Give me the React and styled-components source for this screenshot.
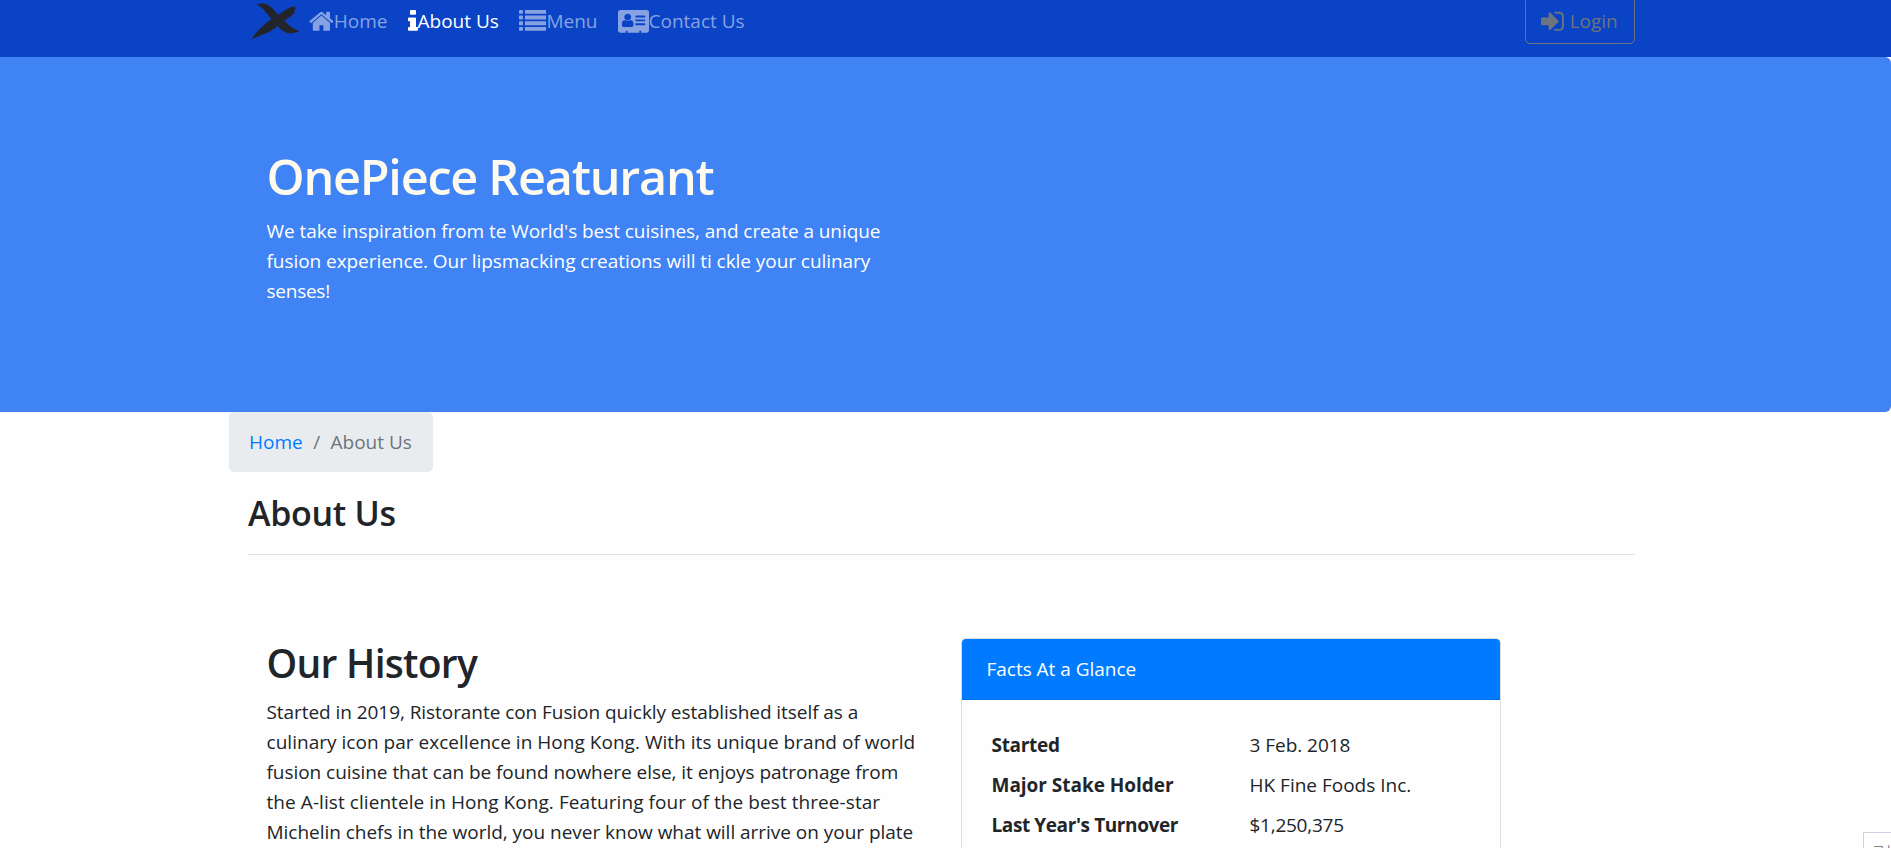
import React from 'react';
import styled, { createGlobalStyle } from 'styled-components';

const GlobalStyle = createGlobalStyle`
  *, *::before, *::after { box-sizing: border-box; }
  html, body { margin: 0; height: 100%; overflow: hidden; }
  body {
    background: #fefefe;
    color: #212529;
    font: 400 19px/30px "Open Sans", "Noto Sans", "Noto Sans CJK KR", sans-serif;
    letter-spacing: -0.02px;
  }
  h1, h2, h3, p, ul, ol, dl, dd { margin: 0; padding: 0; }
`;

const Page = styled.div`
  height: 848px;
  overflow: hidden;
`;

const Navbar = styled.nav`
  height: 57px;
  background: #0b43c6;
  padding-left: 248px;
`;

const NavInner = styled.div`
  width: 1387px;
  display: flex;
  align-items: flex-start;
`;

const Brand = styled.a`
  width: 51px;
  height: 42px;
  margin-right: 10px;
  padding-left: 2px;
  svg { display: block; }
`;

const NavList = styled.ul`
  display: flex;
  gap: 20px;
  list-style: none;
  padding-top: 6px;
`;

const NavLink = styled.a`
  display: flex;
  height: 30px;
  white-space: nowrap;
  color: ${(p) => (p.$active ? '#fff' : '#86a2e3')};
  letter-spacing: ${(p) => p.$spacing || 0}px;
`;

const Glyph = styled.svg`
  display: block;
  flex: none;
  height: 26.67px;
  width: ${(p) => p.$width}px;
  margin-top: 2.2px;
  fill: currentColor;
`;

const LoginButton = styled.a`
  display: flex;
  gap: 2px;
  width: 110px;
  height: 48px;
  margin: -4px 0 0 auto;
  padding: 9px 15px 0;
  border: 1px solid #6c757d;
  border-radius: 5px;
  color: #6c757d;
`;

const Jumbotron = styled.header`
  height: 355px;
  padding: 89px 0 0 266.5px;
  background: #3f83f4;
  color: #fff;
  border-radius: 0 6px 6px 0;
`;

const Title = styled.h1`
  margin-bottom: 10px;
  color: floralwhite;
  font-size: 48.5px;
  font-weight: 600;
  line-height: 60px;
  letter-spacing: -1.22px;
`;

const Line = styled.span`
  display: block;
  white-space: nowrap;
  letter-spacing: ${(p) => p.$spacing || 0}px;
`;

const Container = styled.main`
  width: 1425px;
  margin-left: 229px;
`;

const Breadcrumb = styled.ol`
  display: inline-flex;
  height: 60px;
  width: 204px;
  padding: 15px 20px;
  border-radius: 5px;
  background: #e9ecef;
  list-style: none;
  color: #6c757d;
  vertical-align: top;
`;

const Crumb = styled.li`
  white-space: nowrap;
  a { color: #007bff; }
  & + &::before { content: "/"; padding: 0 10.5px; }
`;

const PageHeading = styled.h3`
  margin: 20px 19px 0;
  height: 63px;
  border-bottom: 1px solid #e1e2e3;
  font-size: 34px;
  font-weight: 600;
  line-height: 42px;
  letter-spacing: -0.3px;
`;

const Columns = styled.div`
  display: flex;
  padding: 83px 0 0 37.5px;
`;

const History = styled.section`
  width: 694px;
`;

const SectionTitle = styled.h2`
  margin: 1px 0 10px;
  font-size: 39px;
  font-weight: 600;
  line-height: 48px;
  letter-spacing: -0.72px;
`;

const Card = styled.section`
  width: 540px;
  height: 300px;
  border: 1px solid #dcdddf;
  border-radius: 5px;
  overflow: hidden;
`;

const CardHeader = styled.div`
  height: 61px;
  padding: 15px 25px;
  background: #007bff;
  border-bottom: 1px solid #006fe6;
  color: #fff;
`;

const Facts = styled.dl`
  display: grid;
  grid-template-columns: 258px 1fr;
  row-gap: 10px;
  padding: 30px 0 0 30px;
`;

const Term = styled.dt`
  font-weight: 700;
  white-space: nowrap;
  letter-spacing: ${(p) => p.$spacing}px;
`;

const Detail = styled.dd`
  white-space: nowrap;
  letter-spacing: ${(p) => p.$spacing}px;
`;

const Tooltip = styled.div`
  position: fixed;
  left: 1863px;
  top: 832px;
  width: 60px;
  height: 30px;
  padding: 7px 8px;
  border: 1px solid #cfcfdf;
  background: #fff;
  color: #8d8078;
  font: 14px/20px "Noto Sans CJK KR", sans-serif;
  white-space: nowrap;
`;

const HomeIcon = () => (
  <Glyph $width={24.8} viewBox="0 0 1664 1792">
    <path d="M1408 992v480q0 26-19 45t-45 19h-384v-384h-256v384h-384q-26 0-45-19t-19-45v-480q0-1 .5-3t.5-3l575-474 575 474q1 2 1 6zm223-69l-62 74q-8 9-21 11h-3q-13 0-21-7l-692-577-692 577q-12 8-24 7-13-2-21-11l-62-74q-8-10-7-23.5t11-21.5l719-599q32-26 76-26t76 26l244 204v-195q0-14 9-23t23-9h192q14 0 23 9t9 23v408l219 182q10 8 11 21.5t-7 23.5z" />
  </Glyph>
);

const InfoIcon = () => (
  <Glyph $width={10} viewBox="0 0 640 1792" preserveAspectRatio="none">
    <path d="M640 1344v128q0 26-19 45t-45 19h-512q-26 0-45-19t-19-45v-128q0-26 19-45t45-19h64v-384h-64q-26 0-45-19t-19-45v-128q0-26 19-45t45-19h384q26 0 45 19t19 45v576h64q26 0 45 19t19 45zm-128-1152v192q0 26-19 45t-45 19h-256q-26 0-45-19t-19-45v-192q0-26 19-45t45-19h256q26 0 45 19t19 45z" />
  </Glyph>
);

const ListIcon = () => (
  <Glyph $width={27.6} viewBox="0 0 1792 1792" preserveAspectRatio="none">
    {[128, 512, 896, 1280].map((y) => (
      <React.Fragment key={y}>
        <rect x="0" y={y} width="256" height="256" rx="32" />
        <rect x="384" y={y} width="1408" height="256" rx="32" />
      </React.Fragment>
    ))}
  </Glyph>
);

const AddressCardIcon = () => (
  <Glyph $width={31} viewBox="0 0 2048 1792" preserveAspectRatio="none">
    <path d="M1024 1131q0-64-9-117.5t-29.5-103-60.5-78-97-28.5q-6 4-30 18t-37.5 21.5-35.5 17.5-43 14.5-42 4.5-42-4.5-43-14.5-35.5-17.5-37.5-21.5-30-18q-57 0-97 28.5t-60.5 78-29.5 103-9 117.5 37 106.5 91 42.5h512q54 0 91-42.5t37-106.5zm-157-520q0-94-66.5-160.5t-160.5-66.5-160.5 66.5-66.5 160.5 66.5 160.5 160.5 66.5 160.5-66.5 66.5-160.5zm925 509v-64q0-14-9-23t-23-9h-576q-14 0-23 9t-9 23v64q0 14 9 23t23 9h576q14 0 23-9t9-23zm0-260v-56q0-15-10.5-25.5t-25.5-10.5h-568q-15 0-25.5 10.5t-10.5 25.5v56q0 15 10.5 25.5t25.5 10.5h568q15 0 25.5-10.5t10.5-25.5zm0-252v-64q0-14-9-23t-23-9h-576q-14 0-23 9t-9 23v64q0 14 9 23t23 9h576q14 0 23-9t9-23zm256-320v1216q0 66-47 113t-113 47h-352v-96q0-14-9-23t-23-9h-64q-14 0-23 9t-9 23v96h-768v-96q0-14-9-23t-23-9h-64q-14 0-23 9t-9 23v96h-352q-66 0-113-47t-47-113v-1216q0-66 47-113t113-47h1728q66 0 113 47t47 113z" />
  </Glyph>
);

const SignInIcon = () => (
  <Glyph $width={26.67} viewBox="128 0 1792 1792">
    <path d="M1312 896q0 26-19 45l-544 544q-19 19-45 19t-45-19-19-45v-288h-448q-26 0-45-19t-19-45v-384q0-26 19-45t45-19h448v-288q0-26 19-45t45-19 45 19l544 544q19 19 19 45zm352-352v704q0 119-84.5 203.5t-203.5 84.5h-320q-13 0-22.5-9.5t-9.5-22.5q0-4-1-20t-.5-26.5 3-23.5 10-19.5 20.5-6.5h320q66 0 113-47t47-113v-704q0-66-47-113t-113-47h-312l-11.5-1-11.5-3-8-5.5-7-9-2-13.5q0-4-1-20t-.5-26.5 3-23.5 10-19.5 20.5-6.5h320q119 0 203.5 84.5t84.5 203.5z" />
  </Glyph>
);

const Logo = () => (
  <svg width="51" height="42" viewBox="0 0 51 42">
    <g fill="#212429" stroke="#29307a" strokeWidth="0.5" strokeLinejoin="round">
      <path d="M7 4.200L12 3.200L17 4.300L22 8L28 14.500L34 20.500L41 27L49 31L47.500 32.200L42 33.300L36.500 33L31 29.500L25 23.500L19 16L13 9Z" />
      <path d="M44.500 6.500L45.800 9.500L43.500 11L45 13L39 17.500L32 22.500L26 27.500L19 32L13 34.500L8 36.500L1.300 39.500L4 35.500L9 29.500L15 24L22 18.500L30 13.500L37 9L41 7Z" />
    </g>
  </svg>
);

const history = [
  ['Started in 2019, Ristorante con Fusion quickly established itself as a', -0.06],
  ['culinary icon par excellence in Hong Kong. With its unique brand of world', 0.027],
  ['fusion cuisine that can be found nowhere else, it enjoys patronage from', -0.046],
  ['the A-list clientele in Hong Kong. Featuring four of the best three-star', 0.068],
  ['Michelin chefs in the world, you never know what will arrive on your plate', -0.027],
];

const facts = [
  ['Started', -0.3, '3 Feb. 2018', -0.03],
  ['Major Stake Holder', -0.03, 'HK Fine Foods Inc.', 0],
  ["Last Year's Turnover", -0.4, '$1,250,375', -0.25],
];

export default function App() {
  return (
    <Page>
      <GlobalStyle />
      <Navbar>
        <NavInner>
          <Brand><Logo /></Brand>
          <NavList>
            <li><NavLink><HomeIcon />Home</NavLink></li>
            <li><NavLink $active><InfoIcon />About Us</NavLink></li>
            <li><NavLink><ListIcon />Menu</NavLink></li>
            <li><NavLink><AddressCardIcon />Contact Us</NavLink></li>
          </NavList>
          <LoginButton><SignInIcon />Login</LoginButton>
        </NavInner>
      </Navbar>
      <Jumbotron>
        <Title>OnePiece Reaturant</Title>
        <p>
          <Line $spacing={-0.06}>We take inspiration from te World's best cuisines, and create a unique</Line>
          <Line $spacing={-0.055}>fusion experience. Our lipsmacking creations will ti ckle your culinary</Line>
          <Line $spacing={-0.25}>senses!</Line>
        </p>
      </Jumbotron>
      <Container>
        <Breadcrumb>
          <Crumb><a>Home</a></Crumb>
          <Crumb>About Us</Crumb>
        </Breadcrumb>
        <PageHeading>About Us</PageHeading>
        <Columns>
          <History>
            <SectionTitle>Our History</SectionTitle>
            <p>
              {history.map(([text, spacing]) => (
                <Line key={text} $spacing={spacing}>{text}</Line>
              ))}
            </p>
          </History>
          <Card>
            <CardHeader>Facts At a Glance</CardHeader>
            <Facts>
              {facts.map(([term, ts, detail, ds]) => (
                <React.Fragment key={term}>
                  <Term $spacing={ts}>{term}</Term>
                  <Detail $spacing={ds}>{detail}</Detail>
                </React.Fragment>
              ))}
            </Facts>
          </Card>
        </Columns>
      </Container>
      <Tooltip>크생</Tooltip>
    </Page>
  );
}
